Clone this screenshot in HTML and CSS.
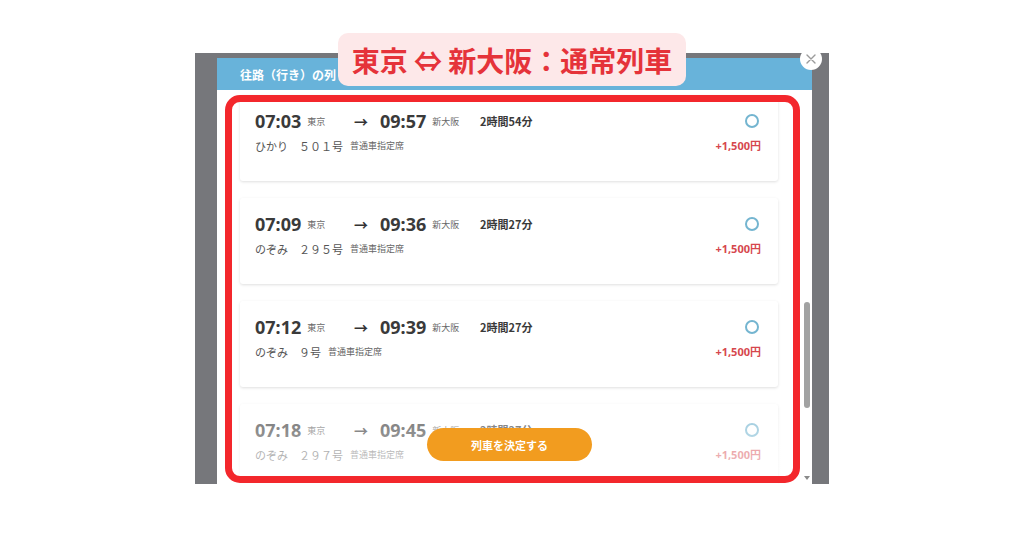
FILE: index.html
```html
<!DOCTYPE html>
<html lang="ja">
<head>
<meta charset="utf-8">
<title>列車選択</title>
<link rel="stylesheet" href="styles.css">
</head>
<body>
<div class="stage">
  <div class="backdrop">
    <div class="modal">
      <div class="modal-head"><span class="head-text">往路（行き）の列</span></div>
      <div class="modal-body">
        <div class="list">
          <div class="card">
            <div class="info">
              <div class="row1">
                <div class="stop"><span class="time">07:03</span><span class="sta">東京</span></div>
                <span class="arrow">→</span>
                <div class="stop"><span class="time">09:57</span><span class="sta">新大阪</span></div>
                <span class="dur">2時間54分</span>
              </div>
              <div class="row2"><span class="train">ひかり　５０１号</span><span class="seat">普通車指定席</span></div>
            </div>
            <div class="side"><span class="radio"></span><span class="price">+1,500円</span></div>
          </div>
          <div class="card">
            <div class="info">
              <div class="row1">
                <div class="stop"><span class="time">07:09</span><span class="sta">東京</span></div>
                <span class="arrow">→</span>
                <div class="stop"><span class="time">09:36</span><span class="sta">新大阪</span></div>
                <span class="dur">2時間27分</span>
              </div>
              <div class="row2"><span class="train">のぞみ　２９５号</span><span class="seat">普通車指定席</span></div>
            </div>
            <div class="side"><span class="radio"></span><span class="price">+1,500円</span></div>
          </div>
          <div class="card">
            <div class="info">
              <div class="row1">
                <div class="stop"><span class="time">07:12</span><span class="sta">東京</span></div>
                <span class="arrow">→</span>
                <div class="stop"><span class="time">09:39</span><span class="sta">新大阪</span></div>
                <span class="dur">2時間27分</span>
              </div>
              <div class="row2"><span class="train">のぞみ　９号</span><span class="seat">普通車指定席</span></div>
            </div>
            <div class="side"><span class="radio"></span><span class="price">+1,500円</span></div>
          </div>
          <div class="card">
            <div class="info">
              <div class="row1">
                <div class="stop"><span class="time">07:18</span><span class="sta">東京</span></div>
                <span class="arrow">→</span>
                <div class="stop"><span class="time">09:45</span><span class="sta">新大阪</span></div>
                <span class="dur">2時間27分</span>
              </div>
              <div class="row2"><span class="train">のぞみ　２９７号</span><span class="seat">普通車指定席</span></div>
            </div>
            <div class="side"><span class="radio"></span><span class="price">+1,500円</span></div>
          </div>
        </div>
        <div class="scrollbar"><div class="thumb"></div><div class="down"></div></div>
        <div class="fade"><button class="decide">列車を決定する</button></div>
      </div>
    </div>
  </div>
  <div class="close"><svg width="10" height="10" viewBox="0 0 10 10"><path d="M1 1L9 9M9 1L1 9" stroke="#9b9b9b" stroke-width="1.4" stroke-linecap="round"/></svg></div>
  <div class="highlight"></div>
  <div class="badge">東京 ⇔ 新大阪：通常列車</div>
</div>
</body>
</html>
```

FILE: styles.css
```css
* { box-sizing: border-box; }
html, body { margin: 0; padding: 0; background: #ffffff; }
body { font-family: "Noto Sans", "Noto Sans CJK JP", sans-serif; color: #333; }

.stage {
  position: relative;
  width: 1024px;
  height: 538px;
  padding: 53px 0 0 195px;
  overflow: hidden;
}

.backdrop {
  width: 634px;
  height: 431px;
  background: #76777b;
  padding: 5px 17px 0 22px;
}

.modal {
  width: 595px;
  height: 426px;
  background: #fff;
  display: flex;
  flex-direction: column;
}

.modal-head {
  height: 32px;
  flex: none;
  background: #68b3da;
  color: #fff;
  font-family: "Noto Sans CJK JP", sans-serif;
  font-weight: 700;
  font-size: 12px;
  display: flex;
  align-items: center;
  padding-left: 23px;
}
.head-text { white-space: nowrap; }

.modal-body {
  flex: 1;
  position: relative;
  display: flex;
  overflow: hidden;
}

.list {
  flex: 1;
  padding: 5px 24px 0 23px;
  display: flex;
  flex-direction: column;
  gap: 17px;
  overflow: hidden;
}

.card {
  flex: none;
  height: 86px;
  background: #fff;
  border-radius: 3px;
  box-shadow: 0 1px 3px rgba(0,0,0,0.13);
  padding: 16px 17px 0 15px;
  display: flex;
  justify-content: space-between;
}

.row1 {
  display: flex;
  align-items: center;
  height: 20px;
}
.stop { width: 99px; display: flex; align-items: center; }
.stop + .arrow + .stop { width: 100px; }
.time {
  font-size: 18px;
  font-weight: 700;
  color: #3a3a3a;
  line-height: 20px;
}
.sta {
  font-family: "Noto Sans CJK JP", sans-serif;
  font-size: 9px;
  color: #666;
  margin-left: 6px;
}
.arrow { width: 26px; font-size: 14px; font-weight: 700; color: #333; }
.dur {
  font-family: "Noto Sans CJK JP", sans-serif;
  font-size: 11px;
  font-weight: 700;
  color: #3a3a3a;
}

.row2 {
  margin-top: 5px;
  line-height: 20px;
  font-family: "Noto Sans CJK JP", sans-serif;
  display: flex;
  align-items: center;
}
.train { font-size: 11px; color: #555; }
.seat { font-size: 9px; color: #666; margin-left: 7px; }

.side {
  display: flex;
  flex-direction: column;
  align-items: flex-end;
}
.radio {
  width: 14px;
  height: 14px;
  border: 2px solid #74b5d0;
  border-radius: 50%;
  margin-top: 3px;
  margin-right: 2px;
}
.price {
  margin-top: 10px;
  line-height: 16px;
  font-size: 11px;
  font-weight: 700;
  color: #d6474d;
}

.scrollbar {
  width: 10px;
  flex: none;
  display: flex;
  flex-direction: column;
  align-items: center;
}
.thumb {
  margin-top: 212px;
  width: 6px;
  height: 106px;
  background: #a2a2a2;
  border-radius: 3px;
}
.down {
  margin-top: auto;
  margin-bottom: 4px;
  width: 0;
  height: 0;
  border-left: 3px solid transparent;
  border-right: 3px solid transparent;
  border-top: 4px solid #8a8a8a;
}

.fade {
  position: absolute;
  left: 0;
  right: 10px;
  bottom: 0;
  height: 82px;
  background: linear-gradient(rgba(255,255,255,0.25), rgba(255,255,255,0.72));
  display: flex;
  justify-content: center;
  align-items: flex-end;
  padding-bottom: 23px;
}
.decide {
  width: 165px;
  height: 33px;
  border: none;
  border-radius: 17px;
  background: #f29c1f;
  color: #fff;
  font-family: "Noto Sans CJK JP", sans-serif;
  font-weight: 700;
  font-size: 11px;
}

.close {
  position: absolute;
  left: 800px;
  top: 48px;
  width: 22px;
  height: 22px;
  border-radius: 50%;
  background: #fff;
  display: flex;
  align-items: center;
  justify-content: center;
}

.highlight {
  position: absolute;
  left: 225px;
  top: 95px;
  width: 575px;
  height: 388px;
  border: 7px solid #f3272c;
  border-radius: 15px;
}

.badge {
  position: absolute;
  left: 338px;
  top: 33px;
  width: 348px;
  height: 53px;
  border-radius: 10px;
  background: #fde8e9;
  color: #e5333a;
  font-family: "Noto Sans CJK JP", sans-serif;
  font-weight: 700;
  font-size: 28px;
  display: flex;
  align-items: center;
  justify-content: center;
  white-space: nowrap;
}
```
